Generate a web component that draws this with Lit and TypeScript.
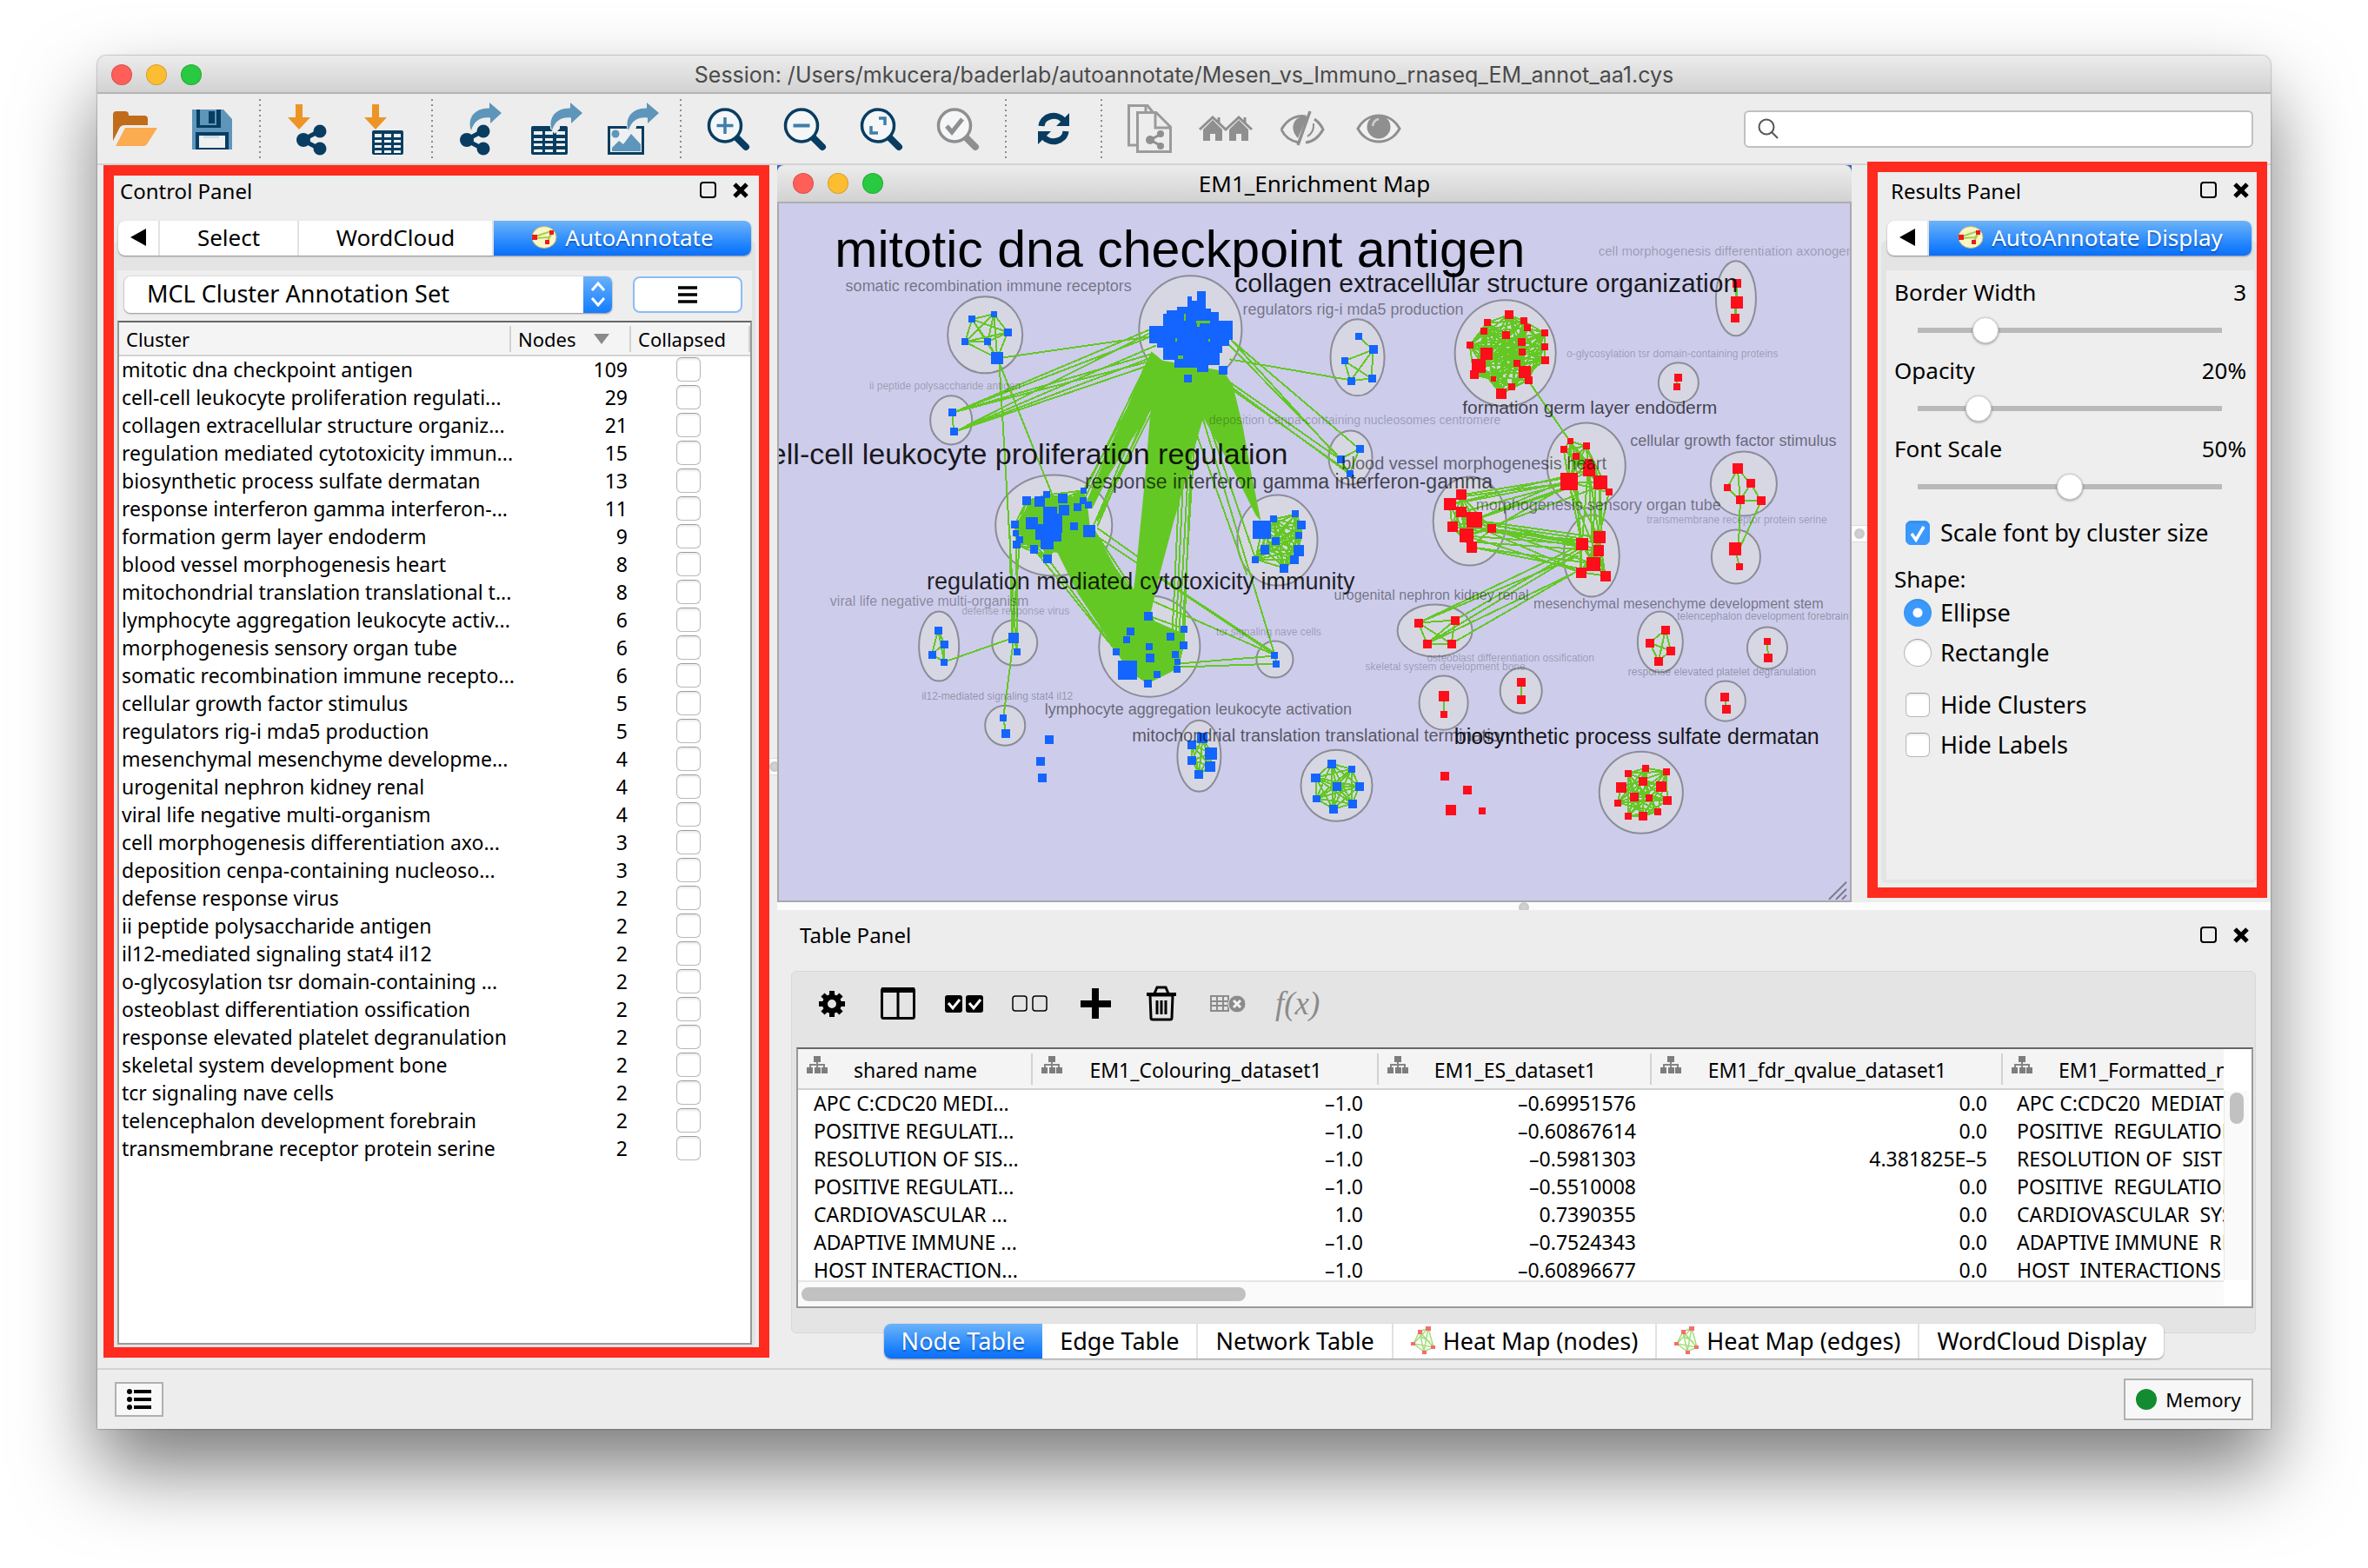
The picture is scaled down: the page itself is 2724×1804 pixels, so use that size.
import { LitElement, html, svg, css, nothing } from "lit";
import { customElement } from "lit/decorators.js";
import { classMap } from "lit/directives/class-map.js";

type Point = [number, number, number];

/* ---------- data ---------- */

const CLUSTERS: [string, number][] = [
  ["mitotic dna checkpoint antigen", 109],
  ["cell-cell leukocyte proliferation regulati...", 29],
  ["collagen extracellular structure organiz...", 21],
  ["regulation mediated cytotoxicity immun...", 15],
  ["biosynthetic process sulfate dermatan", 13],
  ["response interferon gamma interferon-...", 11],
  ["formation germ layer endoderm", 9],
  ["blood vessel morphogenesis heart", 8],
  ["mitochondrial translation translational t...", 8],
  ["lymphocyte aggregation leukocyte activ...", 6],
  ["morphogenesis sensory organ tube", 6],
  ["somatic recombination immune recepto...", 6],
  ["cellular growth factor stimulus", 5],
  ["regulators rig-i mda5 production", 5],
  ["mesenchymal mesenchyme developme...", 4],
  ["urogenital nephron kidney renal", 4],
  ["viral life negative multi-organism", 4],
  ["cell morphogenesis differentiation axo...", 3],
  ["deposition cenpa-containing nucleoso...", 3],
  ["defense response virus", 2],
  ["ii peptide polysaccharide antigen", 2],
  ["il12-mediated signaling stat4 il12", 2],
  ["o-glycosylation tsr domain-containing ...", 2],
  ["osteoblast differentiation ossification", 2],
  ["response elevated platelet degranulation", 2],
  ["skeletal system development bone", 2],
  ["tcr signaling nave cells", 2],
  ["telencephalon development forebrain", 2],
  ["transmembrane receptor protein serine", 2],
];

const COLUMNS = [
  "shared name",
  "EM1_Colouring_dataset1",
  "EM1_ES_dataset1",
  "EM1_fdr_qvalue_dataset1",
  "EM1_Formatted_name",
];

const ROWS: string[][] = [
  ["APC C:CDC20 MEDI...", "–1.0", "–0.69951576", "0.0", "APC C:CDC20  MEDIATED"],
  ["POSITIVE REGULATI...", "–1.0", "–0.60867614", "0.0", "POSITIVE  REGULATION"],
  ["RESOLUTION OF SIS...", "–1.0", "–0.5981303", "4.381825E–5", "RESOLUTION OF  SISTER"],
  ["POSITIVE REGULATI...", "–1.0", "–0.5510008", "0.0", "POSITIVE  REGULATION"],
  ["CARDIOVASCULAR ...", "1.0", "0.7390355", "0.0", "CARDIOVASCULAR  SYSTEM"],
  ["ADAPTIVE IMMUNE ...", "–1.0", "–0.7524343", "0.0", "ADAPTIVE IMMUNE  RESPONSE"],
  ["HOST INTERACTION...", "–1.0", "–0.60896677", "0.0", "HOST  INTERACTIONS"],
];

/* Cluster outlines: cx, cy, rx, ry */
const ELLIPSES: [number, number, number, number][] = [
  [1133, 386, 43, 44], [1369, 380, 59, 62], [1094, 484, 24, 28], [1212, 605, 67, 58],
  [1469, 622, 46, 52], [1561, 412, 31, 44], [1731, 407, 58, 61], [1996, 344, 23, 43],
  [1930, 441, 23, 23], [1824, 536, 45, 49], [1553, 527, 25, 31], [2005, 557, 38, 37],
  [1690, 600, 42, 51], [1830, 640, 32, 47], [1996, 641, 28, 31], [1080, 744, 23, 40],
  [1167, 740, 26, 26], [1322, 744, 58, 58], [1466, 759, 21, 21], [1156, 835, 23, 23],
  [1379, 870, 25, 41], [1537, 904, 41, 41], [1650, 726, 43, 30], [1909, 739, 26, 35],
  [2032, 746, 23, 24], [1660, 809, 28, 31], [1749, 795, 24, 26], [1984, 807, 23, 23],
  [1887, 912, 48, 47],
];

/* Connected clusters: each node is x, y, side */
const BLUE: Point[][] = [
  [[1118, 368, 8], [1143, 362, 7], [1159, 383, 9], [1110, 394, 8], [1136, 394, 8], [1147, 413, 14]],
  [[1095, 475, 9], [1097, 497, 9]],
  [[1181, 577, 10], [1196, 578, 12], [1204, 570, 8], [1222, 574, 11], [1246, 565, 7], [1246, 577, 8],
   [1252, 582, 8], [1239, 584, 9], [1224, 588, 12], [1208, 592, 16], [1187, 603, 14], [1167, 604, 9],
   [1168, 614, 7], [1211, 603, 22], [1200, 613, 18], [1213, 616, 16], [1204, 625, 15], [1235, 606, 9],
   [1253, 612, 14], [1173, 622, 8], [1169, 627, 9], [1189, 632, 9], [1205, 643, 10]],
  [[1451, 610, 21], [1465, 598, 8], [1490, 592, 8], [1497, 605, 10], [1494, 617, 8], [1467, 623, 9],
   [1455, 633, 10], [1494, 634, 12], [1489, 644, 10], [1444, 644, 8], [1477, 654, 10]],
  [[1579, 403, 10], [1546, 416, 8], [1553, 439, 9], [1577, 436, 9]],
  [[1563, 517, 9], [1541, 529, 9], [1552, 546, 8]],
  [[1079, 725, 9], [1086, 741, 9], [1072, 753, 9], [1086, 762, 8]],
  [[1166, 734, 12], [1170, 750, 8]],
  [[1321, 709, 10], [1300, 726, 9], [1296, 736, 8], [1362, 724, 8], [1346, 732, 9], [1361, 742, 9],
   [1322, 744, 8], [1284, 750, 8], [1352, 753, 8], [1323, 757, 10], [1354, 761, 7], [1354, 770, 8],
   [1297, 771, 22], [1331, 776, 8], [1320, 786, 9]],
  [[1466, 754, 8], [1468, 764, 8]],
  [[1154, 826, 8], [1157, 844, 10]],
  [[1383, 849, 12], [1371, 857, 10], [1393, 867, 14], [1371, 875, 10], [1392, 882, 12], [1379, 891, 10]],
  [[1531, 879, 10], [1554, 885, 8], [1513, 895, 10], [1537, 905, 10], [1563, 905, 10], [1514, 919, 8],
   [1555, 925, 10], [1533, 931, 10]],
];
const BLUE_LOOSE: Point[] = [
  [1207, 851, 10], [1197, 876, 10], [1199, 895, 10], [1562, 388, 8], [1407, 427, 10], [1366, 436, 9],
];
const RED: Point[][] = [
  [[1735, 363, 10], [1710, 372, 8], [1752, 370, 8], [1756, 378, 8], [1776, 384, 8], [1706, 382, 8],
   [1731, 386, 9], [1690, 398, 8], [1749, 394, 9], [1776, 400, 8], [1750, 406, 8], [1709, 408, 14],
   [1776, 415, 9], [1700, 422, 16], [1744, 419, 8], [1695, 432, 10], [1753, 429, 14], [1757, 438, 9],
   [1717, 437, 6], [1738, 446, 8], [1726, 454, 12]],
  [[1997, 327, 10], [1997, 349, 14], [1995, 367, 10]],
  [[1929, 435, 9], [1928, 446, 8]],
  [[1805, 508, 7], [1798, 518, 8], [1824, 514, 8], [1812, 526, 8], [1826, 533, 9], [1827, 542, 14],
   [1804, 555, 20], [1840, 556, 16], [1850, 567, 8]],
  [[1680, 570, 12], [1667, 581, 14], [1680, 590, 12], [1695, 599, 18], [1670, 607, 12], [1686, 617, 16],
   [1692, 630, 12], [1715, 609, 10]],
  [[1839, 619, 14], [1819, 627, 14], [1838, 634, 12], [1832, 649, 16], [1818, 659, 12], [1846, 663, 12]],
  [[1995, 632, 14], [2000, 652, 8]],
  [[1631, 717, 10], [1673, 714, 10], [1641, 741, 10], [1669, 741, 10]],
  [[1915, 725, 10], [1897, 740, 10], [1921, 749, 10], [1907, 761, 10]],
  [[2032, 738, 8], [2033, 757, 10]],
  [[1660, 801, 12], [1660, 822, 8]],
  [[1749, 785, 10], [1749, 805, 10]],
  [[1983, 802, 10], [1985, 816, 10]],
  [[1892, 884, 8], [1872, 890, 8], [1916, 888, 8], [1889, 899, 10], [1864, 906, 12], [1910, 905, 12],
   [1879, 917, 10], [1896, 918, 8], [1860, 924, 8], [1917, 921, 10], [1906, 934, 8], [1872, 939, 8],
   [1889, 939, 10]],
];
const RED_LOOSE: Point[] = [
  [1661, 893, 10], [1687, 909, 10], [1668, 932, 12], [1704, 933, 8],
  [1998, 540, 12], [1986, 562, 8], [2013, 557, 10], [2001, 576, 10], [2025, 577, 10],
];

/* Single edges between clusters */
const LINKS =
  "M1147 413L1322 388M1149 413L1168 734M1150 420L1211 572" +
  "M1097 475L1322 380M1097 475L1334 384M1097 475L1324 408M1097 475L1332 414" +
  "M1099 497L1322 384M1099 497L1330 398M1099 497L1330 410M1099 497L1336 416" +
  "M1414 414L1553 438M1416 392L1563 517M1416 392L1541 529M1412 396L1538 524" +
  "M1408 436L1541 529M1408 440L1552 546M1410 444L1546 540M1562 388L1579 403" +
  "M1173 622L1164 734M1169 627L1170 750M1161 604L1164 734M1166 734L1086 762M1166 734L1154 826" +
  "M1253 612L1466 754M1262 608L1310 642M1321 690L1466 754M1333 664L1466 752M1354 764L1466 755M1354 768L1468 764" +
  "M1382 478L1466 754M1376 500L1434 662M1386 476L1444 644M1404 440L1440 560" +
  "M1366 440L1352 736M1372 440L1356 732M1378 440L1360 724M1362 440L1348 732M1370 520L1362 724" +
  "M1189 632L1284 750M1205 643L1284 750M1259 612L1330 720M1255 618L1322 708" +
  "M1334 416L1252 582M1338 416L1260 600M1342 420L1262 606M1330 410L1246 565M1328 412L1246 577" +
  "M1346 424L1254 612M1350 424L1262 600M1324 408L1239 584" +
  "M1757 438L1805 508" +
  "M1680 570L1804 550M1680 572L1804 556M1667 581L1804 555M1680 590L1804 556M1695 599L1804 552M1695 599L1804 562" +
  "M1715 609L1804 558M1670 607L1804 560M1686 617L1840 560M1667 581L1826 542" +
  "M1715 605L1819 620M1715 609L1819 624M1715 609L1819 627M1715 612L1819 630M1695 599L1819 627M1695 599L1839 619" +
  "M1686 617L1819 627M1692 630L1832 649M1686 617L1818 659M1692 630L1818 655M1715 609L1832 649M1692 624L1838 634" +
  "M1695 605L1818 659M1686 610L1819 622" +
  "M1805 508L1819 627M1826 542L1819 627M1827 542L1839 619M1827 542L1832 649M1840 556L1838 634M1840 556L1842 619" +
  "M1804 555L1819 627M1804 555L1839 619M1812 526L1818 659M1835 560L1830 649M1804 560L1846 663M1850 567L1832 649" +
  "M1819 627L1631 717M1819 630L1673 714M1819 634L1641 741M1832 649L1641 741M1818 655L1669 741M1815 640L1631 717" +
  "M1998 540L1986 562M1998 540L2013 557M1998 540L2001 576M2013 557L2001 576M2013 557L2025 577M1986 562L2001 576" +
  "M2001 576L2025 577M2001 576L1999 632M2025 577L2000 632";

/* Bundles of edges too dense to tell apart */
const BUNDLES = [
  "M1324 405L1352 428L1312 490L1276 546L1256 586L1250 576L1266 540L1290 484Z",
  "M1328 414L1410 428L1384 480L1350 600L1334 660L1322 712L1298 726L1306 660L1316 560Z",
  "M1380 428L1410 432L1418 445L1429 490L1438 540L1450 600L1444 593L1419 543L1382 478Z",
  "M1213 630L1259 610L1284 656L1308 686L1310 730L1284 750L1240 684Z",
  "M1184 578L1222 570L1250 574L1254 612L1240 640L1213 636L1176 624L1170 604Z",
  "M1300 726L1321 712L1362 730L1354 770L1322 786L1296 770L1284 750Z",
];

/* Merged body of the largest cluster */
const CORE =
  "M1366 342H1371V347H1377V336H1387V356H1393V360H1402V370H1418V392H1414V399H1406V407H1403V421H1390V429" +
  "H1377V424H1351V415H1338V401H1331V396H1322V376H1338V362H1342V358H1354V354H1366Z";
const CORE_GAPS = "M1362 362h2v8h-2zM1376 370h16v3h-16zM1352 390h2v4h-2zM1355 410h6v4h-6zM1390 391h2v3h-2zM1377 373h3v4h-3z";

/* Cluster labels: text, centre x, baseline, font size, ink opacity */
const LABELS: [string, number, number, number, number][] = [
  ["mitotic dna checkpoint antigen", 1357, 308, 59, 1],
  ["collagen extracellular structure organization", 1709, 337, 30, 0.9],
  ["somatic recombination immune receptors", 1137, 336, 18, 0.45],
  ["regulators rig-i mda5 production", 1556, 363, 18, 0.45],
  ["ii peptide polysaccharide antigen", 1087, 449, 12, 0.25],
  ["response interferon gamma interferon-gamma", 1482, 563, 23, 0.7],
  ["regulation mediated cytotoxicity immunity", 1312, 678, 27, 0.85],
  ["viral life negative multi-organism", 1069, 697, 16, 0.35],
  ["defense response virus", 1168, 707, 12, 0.25],
  ["tcr signaling nave cells", 1459, 731, 12, 0.25],
  ["il12-mediated signaling stat4 il12", 1147, 805, 12, 0.3],
  ["lymphocyte aggregation leukocyte activation", 1378, 822, 18, 0.5],
  ["mitochondrial translation translational termination", 1519, 853, 20, 0.6],
  ["biosynthetic process sulfate dermatan", 1882, 856, 25, 0.9],
  ["o-glycosylation tsr domain-containing proteins", 1923, 412, 12, 0.25],
  ["formation germ layer endoderm", 1828, 477, 21, 0.7],
  ["deposition cenpa-containing nucleosomes centromere", 1558, 489, 14, 0.25],
  ["cellular growth factor stimulus", 1993, 514, 18, 0.5],
  ["blood vessel morphogenesis heart", 1695, 541, 20, 0.55],
  ["morphogenesis sensory organ tube", 1838, 588, 18, 0.45],
  ["transmembrane receptor protein serine", 1997, 603, 12, 0.25],
  ["urogenital nephron kidney renal", 1646, 690, 16, 0.45],
  ["mesenchymal mesenchyme development stem", 1930, 700, 16, 0.45],
  ["telencephalon development forebrain", 2027, 713, 12, 0.3],
  ["osteoblast differentiation ossification", 1737, 761, 12, 0.25],
  ["skeletal system development bone", 1662, 771, 12, 0.25],
  ["response elevated platelet degranulation", 1980, 777, 12, 0.3],
];

/* Large clusters skip some pairs so that single edges stay visible */
const mesh = (nodes: Point[]) =>
  nodes
    .map((a, i) =>
      nodes
        .slice(i + 1)
        .filter((_, k) => nodes.length < 12 || (i * 2 + k) % 5 < 3)
        .map((b) => `M${a[0]} ${a[1]}L${b[0]} ${b[1]}`)
        .join("")
    )
    .join("");
const squares = (nodes: Point[]) =>
  nodes.map(([x, y, s]) => `M${Math.round(x - s / 2)} ${Math.round(y - s / 2)}h${s}v${s}h${-s}z`).join("");

/* ---------- icons ---------- */

const NAVY = "#083d61";
const SKY = "#5d96ba";
const AMBER = "#ed9426";
const GREY = "#8f8f8f";

const share = (x: number) => svg`<g transform="translate(${x} 28)" fill=${NAVY}>
  <path d="M7 17L28 6M7 17L28 28" stroke=${NAVY} stroke-width="5"/>
  <circle cx="8" cy="17" r="8"/><circle cx="27" cy="7" r="7.5"/><circle cx="27" cy="27" r="7.5"/></g>`;
const down = svg`<path d="M18 4h8v15h9L22 33L9 19h9z" fill=${AMBER}/>`;
const forward = (x: number) => svg`<path transform="translate(${x} 0)" fill=${SKY}
  d="M24 2L38 14L25 26V19.500C13 18 6 24 3 34C-2 20 7 8 24 8.500Z"/>`;
const lens = (c: string, inner: unknown) => svg`
  <path d="M42 43L52 53" stroke=${c} stroke-width="8" stroke-linecap="round"/>
  <circle cx="28" cy="28.500" r="18.500" fill="#f4f6f7" stroke=${c} stroke-width="3.500"/>${inner}`;

const TOOL_ICONS: Record<string, unknown> = {
  open: svg`<path d="M6 46V16q0-4 4-4h10q4 0 4 4v1h18q4 0 4 4v7H19q-4 0-6 4z" fill="#c06c1b"/>
    <path d="M20 31h37L45 50q-1 2-4 2H9z" fill="#fbab50"/>`,
  save: svg`<path d="M9 10h36l10 11v35H9z" fill=${SKY}/><path d="M14 10h28v21H14z" fill=${NAVY}/>
    <path d="M18 10h19v18H18z" fill=${SKY}/><path d="M28 12h7v14h-7z" fill=${NAVY}/>
    <path d="M13 36h38v20H13z" fill=${NAVY}/><path d="M17 40h30v14H17z" fill="#eef0f2"/><path d="M22 40h18v3H22z" fill="#cfdbe4"/>`,
  importNet: svg`${down}${share(19)}`,
  importTable: svg`${down}<rect x="18" y="34" width="36" height="28" rx="2" fill=${NAVY}/>
    <path fill="#eef0f2" d="M21 38h8v4h-8zM32 38h8v4h-8zM43 38h8v4h-8zM21 45h8v3h-8zM32 45h8v3h-8zM43 45h8v3h-8zM21 51h8v3h-8zM32 51h8v3h-8zM43 51h8v3h-8zM21 57h8v3h-8zM32 57h8v3h-8zM43 57h8v3h-8z"/>`,
  exportNet: svg`${forward(19)}${share(9)}`,
  exportTable: svg`<rect x="3" y="29" width="42" height="33" rx="2" fill=${NAVY}/>
    <path fill="#eef0f2" d="M6 35h10v4H6zM19 35h9v4h-9zM32 35h10v4H32zM6 43h10v3H6zM19 43h9v3h-9zM32 43h10v3H32zM6 49h10v3H6zM19 49h9v3h-9zM32 49h10v3H32zM6 56h10v3H6zM19 56h9v3h-9zM32 56h10v3H32z"/>
    <path d="M24 20h12v12l-6 6-5-6z" fill="#ededed"/>${forward(24)}`,
  exportImage: svg`<rect x="4.500" y="30.500" width="39" height="30" fill="#eef0f2" stroke=${NAVY} stroke-width="3"/>
    <circle cx="12" cy="38" r="4.500" fill=${SKY}/><path d="M8 58V54l8-8 5 4 9-12 11 12v8z" fill=${SKY}/>
    <path d="M24 20h12v11l-6 6-5-6z" fill="#ededed"/>${forward(24)}`,
  zoomIn: lens(NAVY, svg`<path d="M28 19v19M18.500 28.500h19" stroke="#3f7ea8" stroke-width="3.500"/>`),
  zoomOut: lens(NAVY, svg`<path d="M18.500 28.500h19" stroke="#3f7ea8" stroke-width="4"/>`),
  zoomFit: lens(NAVY, svg`<path d="M29 20h7v8M20 29v8h8" fill="none" stroke="#3f7ea8" stroke-width="3.500"/>`),
  zoomSel: lens(GREY, svg`<path d="M19 29l6 7L37 21" fill="none" stroke=${GREY} stroke-width="5"/>`),
  refresh: svg`<path d="M18 29C19 17 36 13 44 23M46 35C45 47 28 51 20 41" fill="none" stroke=${NAVY} stroke-width="7"/>
    <path d="M50 14v15H35zM14 50V35h15z" fill=${NAVY}/>`,
  copy: svg`<g fill="none" stroke="#9b9b9b" stroke-width="3"><path d="M18 51H8.500V5.500H30L37 14"/><path d="M28 5v8"/>
    <path d="M18.500 13.500H40L56.500 30V58.500H18.500zM39 14v17h17"/></g>
    <g fill=${GREY}><path d="M33 45L46 38M33 45L46 52" stroke=${GREY} stroke-width="3"/><circle cx="33" cy="45" r="5"/><circle cx="45" cy="38" r="4"/><circle cx="45" cy="52" r="4"/></g>`,
  homes: svg`<g fill=${GREY}><path d="M6 33l11-11 11 11v13h-8v-8h-6v8H6z"/><path d="M36 33l11-11 11 11v13h-8v-8h-6v8h-8z"/>
    <path d="M2 33L17 19L32 33L47 19L62 33M24 19v6M54 19v6" fill="none" stroke=${GREY} stroke-width="3"/></g>`,
  hide: svg`<path d="M8 33C16 19 28 16 36 18M28 48C18 46 12 42 8 33M46 21Q53 26 56 33Q48 47 36 48" fill="none" stroke=${GREY} stroke-width="3"/>
    <path d="M41 12L27 51" stroke=${GREY} stroke-width="3.500"/><path d="M38 18C22 16 16 32 27 43z" fill=${GREY}/><path d="M45 26Q46 36 38 41" fill="none" stroke=${GREY} stroke-width="2"/>`,
  show: svg`<path d="M8 32C19 12 45 12 56 32C45 52 19 52 8 32z" fill="#f1f1f1" stroke=${GREY} stroke-width="3"/>
    <circle cx="32" cy="30" r="13.500" fill=${GREY}/><path d="M25 29Q26 22 32 21" fill="none" stroke="#d0d0d0" stroke-width="2.500"/>`,
};

const TOOL_GROUPS: [string, string][][] = [
  [["open", "Open session"], ["save", "Save session"]],
  [["importNet", "Import network"], ["importTable", "Import table"]],
  [["exportNet", "Export network"], ["exportTable", "Export table"], ["exportImage", "Export image"]],
  [["zoomIn", "Zoom in"], ["zoomOut", "Zoom out"], ["zoomFit", "Fit content"], ["zoomSel", "Zoom to selection"]],
  [["refresh", "Apply layout"]],
  [["copy", "New network from selection"], ["homes", "First neighbors"], ["hide", "Hide selected"], ["show", "Show all"]],
];

const annotateIcon = html`<svg class="annotate" viewBox="0 0 30 26" aria-hidden="true">
  <ellipse cx="15" cy="13" rx="14" ry="12.500" fill="#f9f6c8" stroke="#c9b56a"/>
  <path d="M5 12L23 6M6 14L20 13L24 8M18 19L24 8" fill="none" stroke="#a6cf4e" stroke-width="2"/>
  <path d="M1 10h6v6H1zM21 5h5v5h-5zM16 16h5v5h-5z" fill="#ea1c1c"/></svg>`;

const heatIcon = html`<svg class="heat" viewBox="0 0 28 32" aria-hidden="true">
  <path d="M20 2L3 20L15 29L26 24L20 2L10 6L15 29L20 2M10 6L26 24L3 20L10 6M12 12L22 18" fill="none" stroke="#a5dd7c" stroke-width="1.500"/>
  <path d="M17 0h6v5h-6zM8 4h5v5H8zM0 18h5v4H0zM13 28h5v4h-5zM23 22h5v4h-5z" fill="#fb6a6a"/></svg>`;

const treeIcon = html`<svg class="tree" viewBox="0 0 24 20" aria-hidden="true">
  <path d="M12 6v8M4 14v-4h16v4" fill="none" stroke="#858585" stroke-width="2"/>
  <path d="M8 0h8v7H8zM0 13h7v7H0zM9 13h7v7H9zM17 13h7v7h-7z" fill="#7d7d7d"/></svg>`;

const floatIcon = html`<svg viewBox="0 0 20 20" aria-hidden="true"><rect x="1" y="1" width="17" height="17" rx="3" fill="none" stroke="#000" stroke-width="2"/></svg>`;
const closeIcon = html`<svg viewBox="0 0 20 20" aria-hidden="true"><path d="M3 3L17 17M17 3L3 17" stroke="#000" stroke-width="5"/></svg>`;

const TABLE_TOOLS: [string, unknown][] = [
  ["Settings", svg`<circle cx="22" cy="22" r="8" fill="none" stroke="#000" stroke-width="6"/>
    <path d="M22 7v5M22 32v5M7 22h5M32 22h5M11.500 11.500l4 4M28.500 28.500l4 4M11.500 32.500l4-4M28.500 15.500l4-4" stroke="#000" stroke-width="6"/>`],
  ["Show columns", svg`<rect x="3.500" y="4.500" width="37" height="34" rx="2" fill="none" stroke="#000" stroke-width="3"/><path d="M3 3h38v6H3z"/><path d="M22 6v32" stroke="#000" stroke-width="3"/>`],
  ["Select all", svg`<rect x="0" y="12" width="20" height="20" rx="3"/><rect x="24" y="12" width="20" height="20" rx="3"/>
    <path d="M4 21l5 6 8-10M28 21l5 6 8-10" fill="none" stroke="#fff" stroke-width="3"/>`],
  ["Select none", svg`<rect x="2" y="13" width="16" height="17" rx="3" fill="none" stroke="#000" stroke-width="1.500"/><rect x="25" y="13" width="16" height="17" rx="3" fill="none" stroke="#000" stroke-width="1.500"/>`],
  ["Add column", svg`<path d="M17 4h8v14h14v8H25v13h-8V26H4v-8h13z"/>`],
  ["Delete columns", svg`<path d="M4 9h34v4H4z"/><path d="M13 10l3-7h10l3 7" fill="none" stroke="#000" stroke-width="3"/>
    <path d="M8 12h26l-1 26q0 2-2 2H11q-2 0-2-2z" fill="none" stroke="#000" stroke-width="3"/><path d="M16 18v16M21 18v16M26 18v16" stroke="#000" stroke-width="3"/>`],
  ["Delete table", svg`<g fill="none" stroke="#8b8b8b" stroke-width="2"><path d="M2 13h20v17H2zM2 19h20M2 24h20M9 13v17M16 13v17"/></g>
    <circle cx="32" cy="22" r="10" fill="#8b8b8b" stroke="#e4e4e4"/><path d="M28 18l8 8M36 18l-8 8" stroke="#f4f4f4" stroke-width="3"/>`],
];

/* ---------- network view ---------- */

@customElement("network-view")
export class NetworkView extends LitElement {
  static styles = css`
    :host { display: block; height: 100%; contain: size; background: #cdcceb; overflow: hidden; }
    .graph { display: block; width: 100%; height: 100%; font-family: "Liberation Sans", Arial, sans-serif; }
    .outline { fill: rgba(226, 226, 220, 0.5); stroke: #8c8c98; stroke-width: 2; }
    .edge { fill: none; stroke: #64c824; stroke-width: 2; shape-rendering: crispEdges; }
    .bundle { fill: #64c824; stroke: none; }
    .blue { fill: #1464ff; shape-rendering: crispEdges; }
    .red { fill: #fe0d1b; shape-rendering: crispEdges; }
    .gap { fill: #64c824; shape-rendering: crispEdges; }
    .label { text-anchor: middle; fill: #000; }
    .tail { text-anchor: end; }
    .head { text-anchor: start; }
    .grip { stroke: #7c7c8c; stroke-width: 2; }
  `;

  render() {
    return html`<svg class="graph" viewBox="896 234 1231 803" preserveAspectRatio="xMidYMid slice" role="img" aria-label="EM1_Enrichment Map">
      ${ELLIPSES.map(([cx, cy, rx, ry]) => svg`<ellipse class="outline" cx=${cx} cy=${cy} rx=${rx} ry=${ry}/>`)}
      ${BUNDLES.map((d) => svg`<path class="bundle" d=${d}/>`)}
      ${[...BLUE, ...RED].map((nodes) => svg`<path class="edge" d=${mesh(nodes)}/>`)}
      <path class="edge" d=${LINKS}/>
      <path class="blue" d=${CORE}/>
      <path class="gap" d=${CORE_GAPS}/>
      ${[...BLUE, BLUE_LOOSE].map((nodes) => svg`<path class="blue" d=${squares(nodes)}/>`)}
      ${[...RED, RED_LOOSE].map((nodes) => svg`<path class="red" d=${squares(nodes)}/>`)}
      ${LABELS.map(([text, x, y, size, ink]) => svg`<text class="label" x=${x} y=${y} font-size=${size} fill-opacity=${ink}>${text}</text>`)}
      <text class="tail" x="1481" y="535" font-size="34" fill-opacity="0.9">cell-cell leukocyte proliferation regulation</text>
      <text class="head" x="1838" y="295" font-size="15" fill-opacity="0.25">cell morphogenesis differentiation axonogenesis</text>
      <path class="grip" d="M2103 1035L2123 1015M2111 1035L2123 1023M2118 1035L2123 1030"/>
    </svg>`;
  }
}

/* ---------- application window ---------- */

@customElement("app-root")
export class AppRoot extends LitElement {
  static styles = css`
    :host { display: block; background: #fff; color: #000; font-family: "Noto Sans", "Open Sans", sans-serif; font-size: 26px; }
    * { box-sizing: border-box; }
    button, input, select { font: inherit; color: inherit; margin: 0; }
    button { background: none; border: 0; padding: 0; white-space: nowrap; }
    svg { display: block; flex: none; }

    .desktop { display: flex; min-height: 100vh; padding: 64px 112px 160px; }
    .window { flex: 1; min-width: 0; display: flex; flex-direction: column; background: #ededed; border-radius: 10px 10px 0 0;
      box-shadow: 0 0 2px rgba(0, 0, 0, 0.6), 0 46px 90px rgba(0, 0, 0, 0.52); }

    .titlebar { position: relative; display: flex; align-items: center; background: linear-gradient(#ececec, #d2d2d2); border-bottom: 2px solid #b4b4b4; }
    .titlebar.main { height: 44px; padding: 2px 16px 0; border-radius: 10px 10px 0 0; color: #4a4a4a; font-family: Inter, sans-serif; font-size: 25px; }
    .titlebar.frame { height: 44px; padding: 0 18px; border-radius: 8px 8px 0 0; border-bottom-color: #adadad; }
    .lights { display: flex; gap: 16px; flex: 1; }
    .light { width: 24px; height: 24px; border-radius: 50%; border: 1px solid rgba(0, 0, 0, 0.15); }
    .light.close { background: #fe5f58; }
    .light.min { background: #fdbd30; }
    .light.max { background: #29c941; }
    .balance { flex: 1; }

    .toolbar { display: flex; align-items: center; height: 82px; padding-right: 20px; border-bottom: 2px solid #d2d2d2; }
    .group { display: flex; }
    .tool { width: 88px; height: 64px; display: grid; place-items: center; }
    .tool svg { width: 64px; height: 64px; }
    .sep { width: 2px; height: 68px; margin: 0 10px; background: repeating-linear-gradient(#8c8c8c 0 2px, transparent 2px 6px); }
    .search { display: flex; align-items: center; gap: 12px; width: 586px; height: 43px; margin-left: auto; padding: 0 14px;
      background: #fff; border: 2px solid #c0c0c0; border-radius: 6px; }
    .search svg { width: 24px; height: 24px; }
    .search input { flex: 1; min-width: 0; border: 0; outline: 0; background: none; }

    .workspace { flex: 1; display: flex; min-height: 0; }
    .left { display: flex; padding: 0 0 12px 7px; }
    .callout { display: flex; flex-direction: column; border: 12px solid #fe2b1e; background: #ededed; }
    .control { width: 766px; }
    .results { width: 460px; margin: -4px 4px 5px 0; z-index: 1; }
    .panelhead { display: flex; align-items: center; justify-content: space-between; height: 52px; padding: 0 11px 18px 7px; font-size: 24px; }
    .results .panelhead { height: 56px; padding: 4px 8px 18px 15px; }
    .headbtns { display: flex; gap: 17px; }
    .headbtns button, .headbtns svg { width: 20px; height: 20px; }

    .tabs { display: flex; position: relative; height: 40px; border-radius: 8px; box-shadow: 0 1px 2px rgba(0, 0, 0, 0.4); background: #fff; overflow: hidden; flex: none; }
    .tab { display: flex; align-items: center; justify-content: center; gap: 9px; padding-bottom: 2px; border-right: 2px solid #e2e2e2; flex: none; }
    .tab:last-child { border-right: 0; }
    .tab.on { color: #fff; background: linear-gradient(#6cb3fa, #1a80fd 75%, #0d6ffb); text-shadow: 0 2px 2px rgba(0, 40, 110, 0.5); border-right: 0; }
    .tab.grow { flex: 1; }
    .annotate { width: 30px; height: 26px; }
    .heat { width: 28px; height: 32px; }
    .control .tabs { margin: 0 9px 0 5px; }
    .results .tabs { margin: 0 6px 0 11px; }
    .arrow { width: 48px; }
    .arrow svg { width: 18px; height: 20px; }
    .t-select { width: 160px; }
    .t-cloud { width: 224px; }

    .pane { flex: 1; display: flex; flex-direction: column; min-height: 0; margin-top: -17px; padding: 34px 4px 3px; background: #e4e4e4; border-radius: 6px; }
    .control .pane { margin-right: 4px; }
    .results .pane { margin: -17px 0 5px 4px; padding: 34px 3px 4px 6px; }
    .body { flex: 1; display: flex; flex-direction: column; background: #eeeeee; }

    .picker { display: flex; align-items: center; gap: 24px; padding: 7px 11px 9px 8px; font-size: 27px; }
    .combo { flex: 1; display: grid; height: 42px; border-radius: 7px; box-shadow: 0 0 1px rgba(0, 0, 0, 0.6), 0 1px 2px rgba(0, 0, 0, 0.35); overflow: hidden; }
    .combo select { grid-area: 1 / 1; appearance: none; border: 0; background: #fff; padding: 0 40px 2px 26px; line-height: 40px; outline: 0; }
    .combo svg { grid-area: 1 / 1; justify-self: end; width: 33px; height: 42px; pointer-events: none; background: linear-gradient(#69b1fa, #147cff); }
    .menu { width: 126px; height: 42px; display: grid; place-items: center; background: #fff; border: 2px solid #8cbdf2; border-radius: 8px; }
    .menu svg { width: 22px; height: 20px; }

    .framebox { background: #fff; border: 2px solid #999; border-top-color: #666; }
    .clusters { flex: 1; }
    table { border-collapse: separate; border-spacing: 0; table-layout: fixed; width: 100%; font-size: 23px; }
    th { font-weight: 400; text-align: left; background: #f4f4f4; border-bottom: 2px solid #d2d2d2; padding: 0; }
    td { padding: 0 0 2px; height: 32px; line-height: 30px; white-space: pre; }
    .clusters th { height: 39px; font-size: 22px; }
    .th { display: flex; align-items: center; gap: 20px; height: 30px; border-right: 2px solid #d2d2d2; padding-left: 8px; white-space: nowrap; }
    .clusters td:first-child { padding-left: 3px; }
    .clusters .num { text-align: right; padding-right: 4px; }
    .c-nodes { width: 138px; }
    .c-coll { width: 137px; }
    .sort { width: 0; height: 0; border: 9px solid transparent; border-top: 12px solid #8a8a8a; border-bottom: 0; }
    .clusters .tick { padding-right: 5px; }

    input[type="checkbox"], input[type="radio"] { appearance: none; display: block; width: 28px; height: 28px; background: #fff; border: 1px solid #b8b8b8;
      border-top-color: #9c9c9c; border-radius: 6px; box-shadow: inset 0 2px 2px rgba(0, 0, 0, 0.08); }
    input[type="radio"] { width: 32px; height: 32px; border-radius: 50%; }
    input[type="radio"]:checked { border: 0; background: radial-gradient(circle, #fff 5px, #3b99fc 6px); }
    .tick input { margin: 0 auto; }
    .check { display: grid; grid-template-columns: 32px auto; justify-content: start; align-items: center; gap: 10px; height: 36px; line-height: 36px; margin-left: 11px; font-size: 27px; }
    .box { display: grid; place-items: center; }
    .box > * { grid-area: 1 / 1; }
    .box svg { width: 28px; height: 28px; pointer-events: none; }
    .box input[type="checkbox"]:checked { background: #3b99fc; border-color: #3b99fc; }

    .settings { padding: 7px 9px; }
    .slider { display: grid; grid-template-columns: 1fr auto; height: 90px; align-content: start; line-height: 36px; }
    .slider input { grid-column: 1 / -1; appearance: none; width: auto; height: 30px; margin: 11px 13px 0 12px; background: none; }
    .slider input::-webkit-slider-runnable-track { height: 30px; background: linear-gradient(#b9b9b9, #b9b9b9) no-repeat center / calc(100% - 30px) 6px; }
    .slider input::-webkit-slider-thumb { appearance: none; width: 30px; height: 30px; border-radius: 50%; background: #fff; border: 1px solid #d0d0d0; box-shadow: 0 1px 3px rgba(0, 0, 0, 0.4); }
    .options { border: 0; margin: 17px 0 0; padding: 0; display: flex; flex-direction: column; gap: 10px; }
    .options legend { padding: 0 0 3px; line-height: 36px; }
    .toggles { display: flex; flex-direction: column; gap: 10px; margin-top: 24px; }
    .first { margin-top: 7px; }

    .vsplit { display: flex; flex-direction: column; justify-content: center; width: 9px; }
    .vsplit.wide { width: 18px; }
    .knobv { display: grid; place-items: center; height: 20px; background: #fdfdfd; border: 1px solid #dcdcdc; border-width: 1px 0; overflow: hidden; }
    .knob { width: 12px; height: 12px; border-radius: 50%; background: radial-gradient(#d4d4d4, #c2c2c2); }
    .hsplit { display: flex; justify-content: center; height: 9px; background: #fcfcfc; overflow: hidden; }

    .right { flex: 1; min-width: 0; display: flex; flex-direction: column; }
    .upper { flex: 1; display: flex; min-height: 0; }
    .netframe { flex: 1; min-width: 0; display: flex; flex-direction: column; background: #3c65b5; }
    .netbody { flex: 1; min-height: 0; border: solid #a9a9a9; border-width: 0 2px 2px; }

    .tablepanel { display: flex; flex-direction: column; padding-bottom: 11px; }
    .tablepanel .panelhead { height: 70px; padding: 0 24px 13px 26px; }
    .tablepane { margin: 0 17px 0 16px; padding: 0 2px 28px 5px; background: #e4e4e4; border: 1px solid #d8d8d8; border-radius: 6px; }
    .tools { display: flex; align-items: center; height: 87px; padding: 0 19px 14px; gap: 32px; }
    .tools button, .tools svg { width: 44px; height: 44px; }
    .tools .fx { width: auto; font: italic 37px/40px "Liberation Serif", serif; color: #8b8b8b; }
    .grid { display: grid; grid-template-columns: 1fr 32px; grid-template-rows: 266px 30px; }
    .view { overflow: hidden; }
    .view th { height: 47px; }
    .view .th { height: 36px; padding: 0 0 0 10px; gap: 4px; }
    .view .th .cap { flex: 1; text-align: center; line-height: 30px; padding: 3px 36px 0 0; }
    .view .th.open .cap { text-align: left; padding-left: 26px; }
    .view .tree { width: 24px; height: 20px; align-self: flex-start; margin-top: 3px; }
    .view .th.open { border-right: 0; }
    .view td { padding: 0 18px 2px; text-align: right; }
    .view td:first-child, .view td:last-child { text-align: left; }
    .view td:last-child { padding: 0 0 2px 16px; }
    .w1 { width: 270px; } .w2 { width: 398px; } .w3 { width: 314px; } .w4 { width: 404px; }
    .vbar { margin: 48px 3px 0 0; background: #fafafa; border-left: 1px solid #e6e6e6; padding: 2px 6px; }
    .vthumb { height: 36px; border-radius: 8px; background: #c1c1c1; }
    .hbar { border-top: 2px solid #e6e6e6; background: #fafafa; padding: 6px 4px; }
    .hthumb { width: 31.3%; height: 16px; border-radius: 8px; background: #c1c1c1; }
    .tablepanel .tabs { align-self: center; margin: -11px 0 0 0; font-size: 27px; }
    .tablepanel .tab { padding: 0 20px 2px; }

    .status { display: flex; align-items: center; justify-content: space-between; height: 70px; padding: 0 20px; border-top: 2px solid #d2d2d2; }
    .list, .memory { background: #f7f7f7; border: 2px solid #b0b0b0; height: 40px; display: flex; align-items: center; justify-content: center; }
    .list { width: 56px; }
    .list svg { width: 28px; height: 24px; }
    .memory { height: 48px; width: 149px; gap: 10px; font-size: 22px; }
    .lamp { width: 24px; height: 24px; border-radius: 50%; background: #128b31; }
  `;

  private lights() {
    return html`<div class="lights">
      <button class="light close" aria-label="Close"></button><button class="light min" aria-label="Minimize"></button><button class="light max" aria-label="Zoom"></button>
    </div>`;
  }

  private head(title: string) {
    return html`<header class="panelhead"><span>${title}</span>
      <div class="headbtns"><button aria-label="Float panel">${floatIcon}</button><button aria-label="Close panel">${closeIcon}</button></div></header>`;
  }

  private back() {
    return html`<button class="tab arrow" aria-label="Previous tabs"><svg viewBox="0 0 18 20"><path d="M18 0v20L0 10z"/></svg></button>`;
  }

  private slider(id: string, label: string, shown: string, min: number, max: number, value: number) {
    return html`<div class="slider"><label for=${id}>${label}</label><output for=${id}>${shown}</output>
      <input id=${id} type="range" min=${min} max=${max} .value=${String(value)} /></div>`;
  }

  private check(label: string, checked = false) {
    return html`<label class="check"><span class="box"><input type="checkbox" .checked=${checked} />
      ${checked ? html`<svg viewBox="0 0 28 28" aria-hidden="true"><path d="M7 15l5 7L21 7" fill="none" stroke="#fff" stroke-width="3.500"/></svg>` : nothing}</span>${label}</label>`;
  }

  private control() {
    return html`<section class="callout control">
      ${this.head("Control Panel")}
      <nav class="tabs" role="tablist">
        ${this.back()}
        <button class="tab t-select" role="tab">Select</button>
        <button class="tab t-cloud" role="tab">WordCloud</button>
        <button class="tab on grow" role="tab" aria-selected="true">${annotateIcon}AutoAnnotate</button>
      </nav>
      <div class="pane"><div class="body">
        <div class="picker">
          <div class="combo"><select aria-label="Annotation set"><option>MCL Cluster Annotation Set</option></select>
            <svg viewBox="0 0 33 42" aria-hidden="true"><path d="M10 16l7-8 7 8M10 25l7 8 7-8" fill="none" stroke="#fff" stroke-width="3"/></svg></div>
          <button class="menu" aria-label="Menu"><svg viewBox="0 0 22 20"><path d="M0 2h22M0 10h22M0 18h22" stroke="#000" stroke-width="3.500"/></svg></button>
        </div>
        <div class="framebox clusters"><table>
          <colgroup><col /><col class="c-nodes" /><col class="c-coll" /></colgroup>
          <thead><tr><th><div class="th">Cluster</div></th><th><div class="th">Nodes<span class="sort"></span></div></th><th><div class="th">Collapsed</div></th></tr></thead>
          <tbody>${CLUSTERS.map(([name, n]) => html`<tr><td>${name}</td><td class="num">${n}</td>
            <td class="tick"><input type="checkbox" aria-label="Collapse ${name}" /></td></tr>`)}</tbody>
        </table></div>
      </div></div>
    </section>`;
  }

  private results() {
    return html`<section class="callout results">
      ${this.head("Results Panel")}
      <nav class="tabs" role="tablist">${this.back()}
        <button class="tab on grow" role="tab" aria-selected="true">${annotateIcon}AutoAnnotate Display</button></nav>
      <div class="pane"><div class="body settings">
        ${this.slider("border", "Border Width", "3", 1, 10, 3)}
        ${this.slider("opacity", "Opacity", "20%", 0, 100, 20)}
        ${this.slider("scale", "Font Scale", "50%", 0, 100, 50)}
        <div class="first">${this.check("Scale font by cluster size", true)}</div>
        <fieldset class="options"><legend>Shape:</legend>
          <label class="check"><input type="radio" name="shape" checked />Ellipse</label>
          <label class="check"><input type="radio" name="shape" />Rectangle</label>
        </fieldset>
        <div class="toggles">${this.check("Hide Clusters")}${this.check("Hide Labels")}</div>
      </div></div>
    </section>`;
  }

  private tablePanel() {
    const tabs: [string, boolean][] = [["Node Table", false], ["Edge Table", false], ["Network Table", false],
      ["Heat Map (nodes)", true], ["Heat Map (edges)", true], ["WordCloud Display", false]];
    return html`<section class="tablepanel">
      ${this.head("Table Panel")}
      <div class="tablepane">
        <div class="tools">
          ${TABLE_TOOLS.map(([label, icon]) => html`<button aria-label=${label}><svg viewBox="0 0 44 44">${icon}</svg></button>`)}
          <button class="fx">f(x)</button>
        </div>
        <div class="framebox grid">
          <div class="view"><table>
            <colgroup><col class="w1" /><col class="w2" /><col class="w3" /><col class="w4" /><col /></colgroup>
            <thead><tr>${COLUMNS.map((c, i) => html`<th><div class=${classMap({ th: true, open: i === 4 })}>${treeIcon}<span class="cap">${c}</span></div></th>`)}</tr></thead>
            <tbody>${ROWS.map((r) => html`<tr>${r.map((v) => html`<td>${v}</td>`)}</tr>`)}</tbody>
          </table></div>
          <div class="vbar"><div class="vthumb"></div></div>
          <div class="hbar"><div class="hthumb"></div></div>
        </div>
      </div>
      <nav class="tabs" role="tablist">${tabs.map(([label, heat], i) => html`<button role="tab" class=${classMap({ tab: true, on: i === 0 })}>${heat ? heatIcon : nothing}${label}</button>`)}</nav>
    </section>`;
  }

  render() {
    return html`<div class="desktop"><main class="window">
      <header class="titlebar main">${this.lights()}<span>Session: /Users/mkucera/baderlab/autoannotate/Mesen_vs_Immuno_rnaseq_EM_annot_aa1.cys</span><div class="balance"></div></header>
      <div class="toolbar">
        ${TOOL_GROUPS.map((group, i) => html`${i ? html`<div class="sep"></div>` : nothing}<div class="group">
          ${group.map(([name, label]) => html`<button class="tool" aria-label=${label}><svg viewBox="0 0 64 64">${TOOL_ICONS[name]}</svg></button>`)}</div>`)}
        <label class="search"><svg viewBox="0 0 24 24" aria-hidden="true"><circle cx="10" cy="10" r="8.500" fill="none" stroke="#555" stroke-width="2"/><path d="M16 16l7 7" stroke="#555" stroke-width="2"/></svg>
          <input type="text" aria-label="Search" /></label>
      </div>
      <div class="workspace">
        <div class="left">${this.control()}</div>
        <div class="vsplit"><div class="knobv"><span class="knob"></span></div></div>
        <div class="right">
          <div class="upper">
            <section class="netframe">
              <header class="titlebar frame">${this.lights()}<span>EM1_Enrichment Map</span><div class="balance"></div></header>
              <div class="netbody"><network-view></network-view></div>
            </section>
            <div class="vsplit wide"><div class="knobv"><span class="knob"></span></div></div>
            ${this.results()}
          </div>
          <div class="hsplit"><span class="knob"></span></div>
          ${this.tablePanel()}
        </div>
      </div>
      <footer class="status">
        <button class="list" aria-label="Task history"><svg viewBox="0 0 28 24"><path d="M8 3h20M8 12h20M8 21h20" stroke="#000" stroke-width="4"/><circle cx="3" cy="3" r="3"/><circle cx="3" cy="12" r="3"/><circle cx="3" cy="21" r="3"/></svg></button>
        <button class="memory"><span class="lamp"></span>Memory</button>
      </footer>
    </main></div>`;
  }
}
